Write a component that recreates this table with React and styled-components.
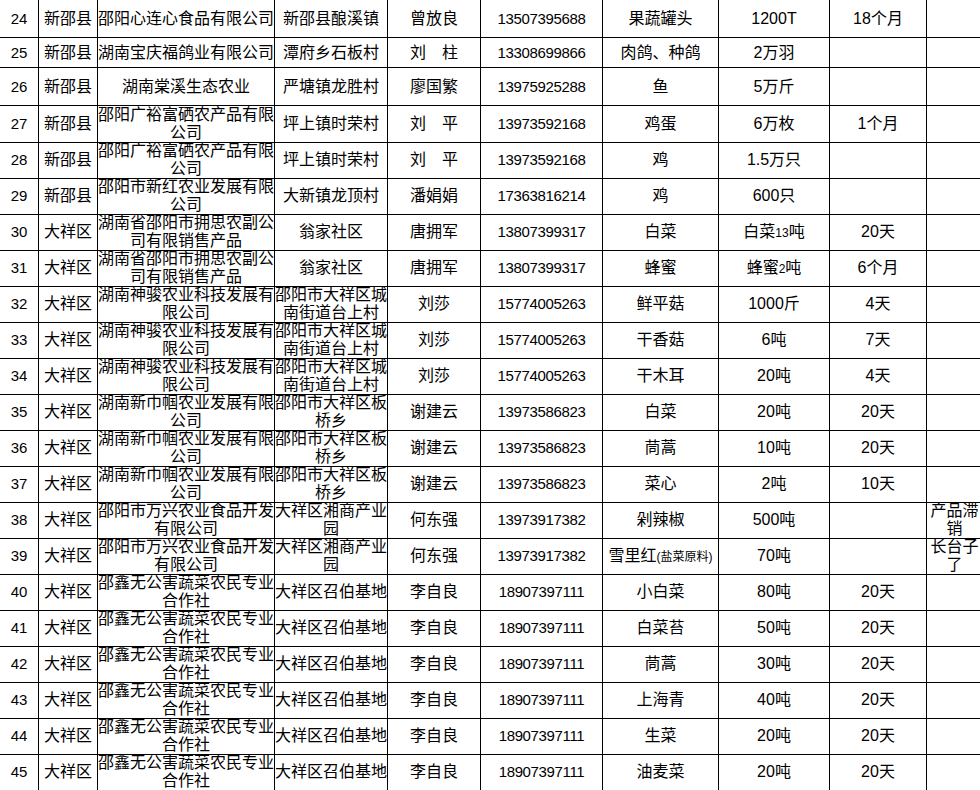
import React from 'react'
import styled, { createGlobalStyle } from 'styled-components'

const GlobalStyle = createGlobalStyle`
  html, body {
    margin: 0;
    padding: 0;
    background: #fff;
  }
  body {
    font-family: "Liberation Sans", "Noto Sans CJK SC", sans-serif;
    color: #000;
  }
`

// column widths, each one includes its right border line
const COLS = [39, 59, 177, 113, 93, 122, 116, 111, 97, 56]

const Frame = styled.div`
  width: 980px;
  height: 790px;
  overflow: hidden;
`

const Sheet = styled.div`
  width: ${COLS.reduce((a, b) => a + b, 0)}px;
  display: flex;
  flex-direction: column;
`

const Row = styled.div`
  display: grid;
  grid-template-columns: ${COLS.map(c => c + 'px').join(' ')};
  height: ${props => props.h}px;
`

const Cell = styled.div`
  box-sizing: border-box;
  border-right: 1px solid #000;
  border-bottom: 1px solid #000;
  display: flex;
  align-items: center;
  justify-content: center;
  text-align: center;
  font-size: 16px;
  line-height: 18px;
  word-break: break-all;
  min-width: 0;
  overflow: visible;
  & > span.txt {
    display: block;
    width: 100%;
  }
`

const Num = styled.span`
  font-size: 15px;
  letter-spacing: ${props => (props.tight ? '-0.35px' : '0')};
`

const Small = styled.span`
  font-size: 12px;
`

const rows = [
  [24, '新邵县', '邵阳心连心食品有限公司', '新邵县酿溪镇', '曾放良', '13507395688', '果蔬罐头', '1200T', '18个月', ''],
  [25, '新邵县', '湖南宝庆福鸽业有限公司', '潭府乡石板村', '刘　柱', '13308699866', '肉鸽、种鸽', '2万羽', '', ''],
  [26, '新邵县', '湖南棠溪生态农业', '严塘镇龙胜村', '廖国繁', '13975925288', '鱼', '5万斤', '', ''],
  [27, '新邵县', '邵阳广裕富硒农产品有限公司', '坪上镇时荣村', '刘　平', '13973592168', '鸡蛋', '6万枚', '1个月', ''],
  [28, '新邵县', '邵阳广裕富硒农产品有限公司', '坪上镇时荣村', '刘　平', '13973592168', '鸡', '1.5万只', '', ''],
  [29, '新邵县', '邵阳市新红农业发展有限公司', '大新镇龙顶村', '潘娟娟', '17363816214', '鸡', '600只', '', ''],
  [30, '大祥区', '湖南省邵阳市拥思农副公司有限销售产品', '翁家社区', '唐拥军', '13807399317', '白菜', <>白菜<Small>13</Small>吨</>, '20天', ''],
  [31, '大祥区', '湖南省邵阳市拥思农副公司有限销售产品', '翁家社区', '唐拥军', '13807399317', '蜂蜜', <>蜂蜜<Small>2</Small>吨</>, '6个月', ''],
  [32, '大祥区', '湖南神骏农业科技发展有限公司', '邵阳市大祥区城南街道台上村', '刘莎', '15774005263', '鲜平菇', '1000斤', '4天', ''],
  [33, '大祥区', '湖南神骏农业科技发展有限公司', '邵阳市大祥区城南街道台上村', '刘莎', '15774005263', '干香菇', '6吨', '7天', ''],
  [34, '大祥区', '湖南神骏农业科技发展有限公司', '邵阳市大祥区城南街道台上村', '刘莎', '15774005263', '干木耳', '20吨', '4天', ''],
  [35, '大祥区', '湖南新巾帼农业发展有限公司', '邵阳市大祥区板桥乡', '谢建云', '13973586823', '白菜', '20吨', '20天', ''],
  [36, '大祥区', '湖南新巾帼农业发展有限公司', '邵阳市大祥区板桥乡', '谢建云', '13973586823', '茼蒿', '10吨', '20天', ''],
  [37, '大祥区', '湖南新巾帼农业发展有限公司', '邵阳市大祥区板桥乡', '谢建云', '13973586823', '菜心', '2吨', '10天', ''],
  [38, '大祥区', '邵阳市万兴农业食品开发有限公司', '大祥区湘商产业园', '何东强', '13973917382', '剁辣椒', '500吨', '', '产品滞销'],
  [39, '大祥区', '邵阳市万兴农业食品开发有限公司', '大祥区湘商产业园', '何东强', '13973917382', <>雪里红<Small>(盐菜原料)</Small></>, '70吨', '', '长台子了'],
  [40, '大祥区', '邵鑫无公害蔬菜农民专业合作社', '大祥区召伯基地', '李自良', '18907397111', '小白菜', '80吨', '20天', ''],
  [41, '大祥区', '邵鑫无公害蔬菜农民专业合作社', '大祥区召伯基地', '李自良', '18907397111', '白菜苔', '50吨', '20天', ''],
  [42, '大祥区', '邵鑫无公害蔬菜农民专业合作社', '大祥区召伯基地', '李自良', '18907397111', '茼蒿', '30吨', '20天', ''],
  [43, '大祥区', '邵鑫无公害蔬菜农民专业合作社', '大祥区召伯基地', '李自良', '18907397111', '上海青', '40吨', '20天', ''],
  [44, '大祥区', '邵鑫无公害蔬菜农民专业合作社', '大祥区召伯基地', '李自良', '18907397111', '生菜', '20吨', '20天', ''],
  [45, '大祥区', '邵鑫无公害蔬菜农民专业合作社', '大祥区召伯基地', '李自良', '18907397111', '油麦菜', '20吨', '20天', ''],
]

// first rows in the sheet are not the usual 36px
const HEIGHTS = { 24: 38, 25: 30, 26: 38 }

export default function App() {
  return (
    <>
      <GlobalStyle />
      <Frame>
        <Sheet>
          {rows.map(r => (
            <Row key={r[0]} h={HEIGHTS[r[0]] || 36}>
              {r.map((v, i) => (
                <Cell key={i}>
                  <span className='txt'>
                    {i === 0 ? <Num>{v}</Num> : i === 5 ? <Num tight>{v}</Num> : v}
                  </span>
                </Cell>
              ))}
            </Row>
          ))}
        </Sheet>
      </Frame>
    </>
  )
}
